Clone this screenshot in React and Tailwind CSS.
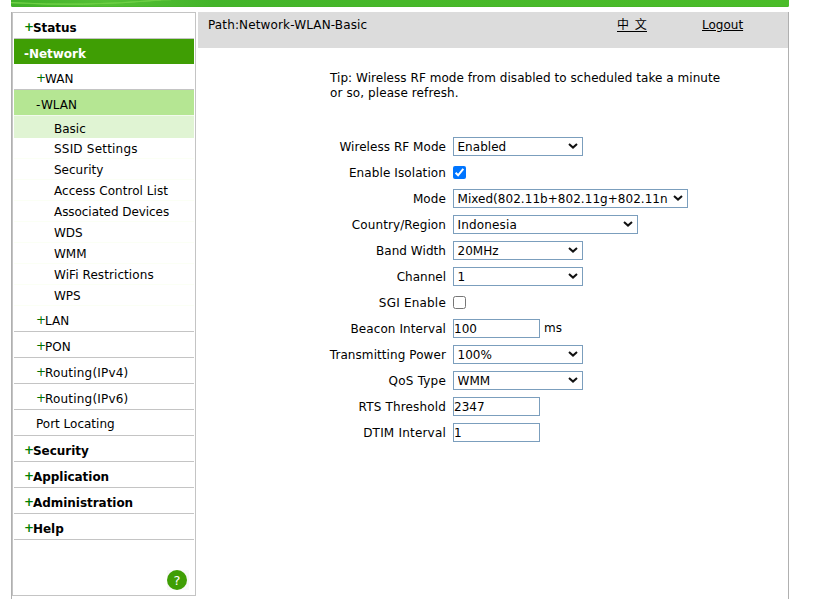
import React from "react";

const LINE = "border-[#c4c4c4]";

function Sign({ sign, bold }) {
  if (!sign) return null;
  if (sign === "-") return <span>-</span>;
  return (
    <span className={bold ? "-mt-px w-[9px] text-[#008000]" : "-mt-px w-[9px] text-[#007000]"}>
      +
    </span>
  );
}

function Top({ label, sign = "+", active, className = "h-[26px]" }) {
  return (
    <li
      className={`flex items-start pl-[10px] pt-2 font-bold tracking-[-0.04px] ${
        active ? "bg-[#3f9e04] text-white" : "border-b border-[#c4c4c4]"
      } ${className}`}
    >
      <Sign sign={sign} bold />
      <span>{label}</span>
    </li>
  );
}

function Sub({ label, sign = "+", tracking = "tracking-normal", className = "h-[26px] pt-2" }) {
  return (
    <li className={`flex items-start border-b pl-[22px] ${LINE} ${className}`}>
      <Sign sign={sign} />
      <span className={tracking}>{label}</span>
    </li>
  );
}

function Leaf({ label, tracking = "tracking-normal" }) {
  return <li className={`h-[21px] border-b border-[#fbfff5] pl-10 pt-1 ${tracking}`}>{label}</li>;
}

function Row({ label, tracking = "tracking-[0.1px]", children }) {
  return (
    <div className="flex h-[26px] items-center">
      <label className={`w-[248px] pt-[2px] text-right ${tracking}`}>{label}</label>
      <div className="ml-[7px] flex items-center">{children}</div>
    </div>
  );
}

function Select({ value, width = "w-[130px]", tracking = "tracking-[0.04px]" }) {
  return (
    <div className={`flex h-[19px] items-center justify-between border border-[#7b9ebd] bg-white pl-[3.5px] pr-1 ${width}`}>
      <span className={`overflow-hidden whitespace-nowrap pt-[2px] ${tracking}`}>{value}</span>
      <svg width="10" height="6" viewBox="0 0 10 6" className="shrink-0">
        <path d="M1 1 L5 4.6 L9 1" fill="none" stroke="#111" strokeWidth="2" />
      </svg>
    </div>
  );
}

function Input({ value }) {
  return (
    <div className="h-[19px] w-[87px] border border-[#7b9ebd] bg-white pt-[2px]">{value}</div>
  );
}

function Check({ checked }) {
  return checked ? (
    <svg width="13" height="13" viewBox="0 0 13 13">
      <rect width="13" height="13" rx="2" fill="#0075ff" />
      <path d="M2.6 6.8 L5.1 9.3 L10.3 2.9" fill="none" stroke="#fff" strokeWidth="2" />
    </svg>
  ) : (
    <div className="h-[13px] w-[13px] rounded-[2.5px] border border-[#767676] bg-white" />
  );
}

export default function App() {
  return (
    <div className="h-[599px] w-[821px] overflow-hidden bg-white pl-[11px] font-['Verdana','DejaVu_Sans',sans-serif] text-[12px] leading-[15px] text-black">
      <div className="h-[7px] w-[778px] overflow-hidden rounded-b-[2px] bg-[#4aba2a]">
        <svg width="778" height="7" viewBox="0 0 778 7">
          <defs>
            <linearGradient id="sheen" x1="0" x2="1" y1="0" y2="0">
              <stop offset="0" stopColor="#3fb028" />
              <stop offset="0.12" stopColor="#55c035" />
              <stop offset="0.26" stopColor="#43b42a" />
              <stop offset="0.5" stopColor="#47b82a" />
              <stop offset="1" stopColor="#4abc29" />
            </linearGradient>
          </defs>
          <rect width="778" height="7" fill="url(#sheen)" />
          <path d="M0 2.5 Q70 7 150 0" fill="none" stroke="#7bd850" strokeWidth="1" />
          <path d="M0 3 Q60 5.5 110 2.5 T160 0" fill="none" stroke="#69cb41" strokeWidth="0.8" />
          <rect y="6" width="778" height="1" fill="#44b024" opacity="0.4" />
        </svg>
      </div>
      <div className="mt-[5px] flex h-[587px] w-[778px] border-x border-[#b0b0b0]">
        <nav className={`flex h-[584px] w-[184px] flex-col border px-px ${LINE}`}>
          <ul>
            <Top label="Status" />
            <Top label="Network" sign="-" active className="h-[25px]" />
            <Sub label="WAN" />
            <li className="flex h-[26px] items-start border-b border-[#f2faec] bg-[#b5e693] pl-[22px] pt-2">
              <span className="w-[5px]">-</span>
              <span>WLAN</span>
            </li>
            <li className="h-[22px] bg-[#e0f4d3] pl-10 pt-[6px]">Basic</li>
            <Leaf label="SSID Settings" tracking="tracking-[0.2px]" />
            <Leaf label="Security" />
            <Leaf label="Access Control List" tracking="tracking-[0.05px]" />
            <Leaf label="Associated Devices" tracking="tracking-[-0.06px]" />
            <Leaf label="WDS" />
            <Leaf label="WMM" />
            <Leaf label="WiFi Restrictions" tracking="tracking-[0.08px]" />
            <Leaf label="WPS" />
            <Sub label="LAN" />
            <Sub label="PON" />
            <Sub label="Routing(IPv4)" tracking="tracking-[0.2px]" />
            <Sub label="Routing(IPv6)" tracking="tracking-[0.2px]" />
            <Sub label="Port Locating" sign="" className="h-[26px] pt-[7px]" />
            <Top label="Security" />
            <Top label="Application" />
            <Top label="Administration" />
            <Top label="Help" />
          </ul>
          <div className="mr-[5px] mt-[30px] flex justify-end">
            <div className="bg-[#f8f8f8] pr-[2px]">
              <div className="flex h-5 w-5 items-center justify-center rounded-full bg-[#3f9e04] text-[13px] text-white">
                ?
              </div>
            </div>
          </div>
        </nav>
        <main className="ml-[2px] flex-1">
          <header className="flex h-9 bg-[#dcdcdc] pt-[6px]">
            <span className="ml-[10px] w-[409px] tracking-[0.14px]">Path:Network-WLAN-Basic</span>
            <a className="w-[85px] font-['DejaVu_Sans','Noto_Sans_CJK_SC',sans-serif]">
              <span className="inline-block h-[14px] w-[30px] whitespace-nowrap border-b border-black leading-[14px] [word-spacing:2px]">
                中 文
              </span>
            </a>
            <a className="underline underline-offset-1">Logout</a>
          </header>
          <p className="ml-[132px] mt-[23px] w-[420px] tracking-[0.05px]">
            Tip: Wireless RF mode from disabled to scheduled take a minute
            <br />
            <span className="tracking-[0.1px]">or so, please refresh.</span>
          </p>
          <form className="mt-[32px]">
            <Row label="Wireless RF Mode" tracking="tracking-[0.05px]">
              <Select value="Enabled" />
            </Row>
            <Row label="Enable Isolation">
              <Check checked />
            </Row>
            <Row label="Mode">
              <Select value="Mixed(802.11b+802.11g+802.11n" width="w-[235px]" tracking="tracking-[0.04px]" />
            </Row>
            <Row label="Country/Region">
              <Select value="Indonesia" width="w-[185px]" tracking="tracking-[0.15px]" />
            </Row>
            <Row label="Band Width" tracking="tracking-[0.05px]">
              <Select value="20MHz" />
            </Row>
            <Row label="Channel" tracking="tracking-normal">
              <Select value="1" />
            </Row>
            <Row label="SGI Enable" tracking="tracking-[0.2px]">
              <Check />
            </Row>
            <Row label="Beacon Interval" tracking="tracking-[0.08px]">
              <Input value="100" />
              <span className="ml-1">ms</span>
            </Row>
            <Row label="Transmitting Power" tracking="tracking-[0.08px]">
              <Select value="100%" />
            </Row>
            <Row label="QoS Type" tracking="tracking-[0.2px]">
              <Select value="WMM" />
            </Row>
            <Row label="RTS Threshold" tracking="tracking-[0.16px]">
              <Input value="2347" />
            </Row>
            <Row label="DTIM Interval" tracking="tracking-[0.2px]">
              <Input value="1" />
            </Row>
          </form>
        </main>
      </div>
    </div>
  );
}
